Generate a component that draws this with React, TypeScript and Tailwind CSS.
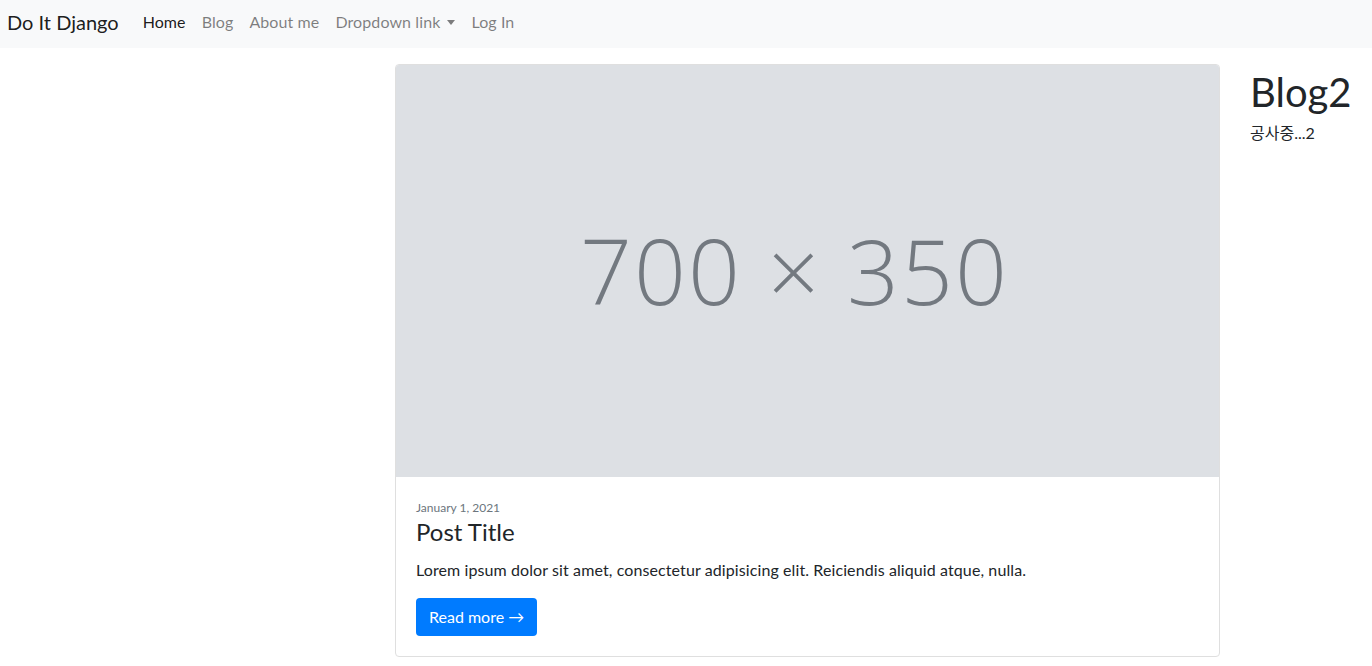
const navLinks = [
  { label: 'Home', active: true },
  { label: 'Blog' },
  { label: 'About me' },
  { label: 'Dropdown link', dropdown: true },
  { label: 'Log In' },
];

function Navbar() {
  return (
    <nav className="flex h-12 items-center bg-[#f8f9fa] px-[7px] pb-[5px]">
      <a className="mr-4 text-[20px] leading-[30px] text-[rgba(0,0,0,0.9)]">Do It Django</a>
      <ul className="flex items-center">
        {navLinks.map((l) => (
          <li key={l.label}>
            <a
              className={`flex items-center px-2 text-[16px] leading-6 tracking-[0.1px] ${
                l.active ? 'text-[rgba(0,0,0,0.9)]' : 'text-[rgba(0,0,0,0.5)]'
              }`}
            >
              {l.label}
              {l.dropdown && (
                <span className="ml-[7px] mt-[1px] inline-block h-0 w-0 border-x-[4px] border-t-[5px] border-x-transparent border-t-[rgba(0,0,0,0.5)]" />
              )}
            </a>
          </li>
        ))}
      </ul>
    </nav>
  );
}

function PostCard() {
  return (
    <div className="w-[825px] shrink-0 overflow-hidden rounded border border-[#dfdfdf] bg-white">
      <div className="flex h-[412px] items-center justify-center bg-[#dde0e4]">
        <span className="pb-[2px] pr-[26px] font-['Open_Sans',sans-serif] text-[91px] font-light leading-none tracking-[2px] text-[#737980]">
          700 × 350
        </span>
      </div>
      <div className="px-5 pb-5 pt-[22px]">
        <div className="text-[12px] leading-[18px] text-[#6c757d]">January 1, 2021</div>
        <h2 className="mb-3 text-[24px] leading-[29px] text-[#212529]">Post Title</h2>
        <p className="mb-4 text-[16px] leading-6 tracking-[0.1px] text-[#212529]">
          Lorem ipsum dolor sit amet, consectetur adipisicing elit. Reiciendis aliquid atque, nulla.
        </p>
        <a className="inline-block rounded bg-[#007bff] px-[13px] py-[7px] text-[16px] leading-6 text-white">
          Read more →
        </a>
      </div>
    </div>
  );
}

export default function App() {
  return (
    <div className="min-h-screen overflow-hidden bg-white font-['Lato','Noto_Sans_CJK_KR',sans-serif] text-[#212529]">
      <Navbar />
      <main className="flex pt-4 pl-[395px]">
        <PostCard />
        <aside className="ml-[30px] shrink-0 pt-[4px]">
          <h1 className="text-[40px] leading-[48px] text-[#212529]">Blog2</h1>
          <p className="mt-[5px] text-[16px] leading-6">공사중...2</p>
        </aside>
      </main>
    </div>
  );
}
